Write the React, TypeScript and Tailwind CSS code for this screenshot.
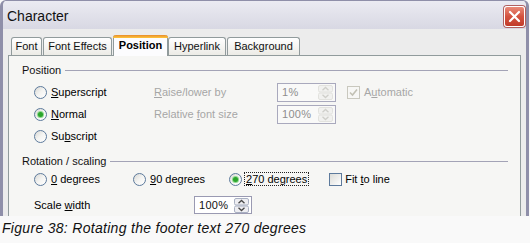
import React from 'react';

const font = { fontFamily: '"Liberation Sans", Arial, sans-serif' };

function Radio({ on }: { on?: boolean }) {
  return (
    <span className="flex h-[13px] w-[13px] shrink-0 items-center justify-center rounded-full border border-[#5d7a9c] bg-linear-to-br from-[#d8d8d4] via-[#f4f4f2] to-white">
      {on && <span className="h-[5px] w-[5px] rounded-full bg-[#2ca52c] shadow-[0_0_0_1px_#8fd88f]" />}
    </span>
  );
}

function Check({ disabled, checked }: { disabled?: boolean; checked?: boolean }) {
  return (
    <span
      className={
        disabled
          ? 'flex h-[13px] w-[13px] shrink-0 items-center justify-center border border-[#c9c8be] bg-[#f7f7f5]'
          : 'flex h-[13px] w-[13px] shrink-0 items-center justify-center border border-[#5d7a9c] bg-linear-to-br from-[#dcdcd7] to-white'
      }
    >
      {checked && (
        <svg width="9" height="9" viewBox="0 0 9 9">
          <path d="M1 4.5 L3.5 7 L8 1.5" fill="none" stroke="#c2c0b4" strokeWidth="1.6" />
        </svg>
      )}
    </span>
  );
}

function Spinner({ disabled }: { disabled?: boolean }) {
  const edge = disabled ? '#e2e2de' : '#a9b0c2';
  const arrow = disabled ? '#cfcfca' : '#4a4a4a';
  const fill = disabled ? '#f1f1ef' : '#eeeef2';
  return (
    <svg width="15" height="15" viewBox="0 0 15 15" className="shrink-0">
      <rect x="0.5" y="0.5" width="14" height="6.5" rx="1.5" fill={fill} stroke={edge} />
      <rect x="0.5" y="8" width="14" height="6.5" rx="1.5" fill={fill} stroke={edge} />
      <path d="M4.5 5.2 L7.5 2.4 L10.5 5.2" fill="none" stroke={arrow} strokeWidth="1.3" />
      <path d="M4.5 9.8 L7.5 12.6 L10.5 9.8" fill="none" stroke={arrow} strokeWidth="1.3" />
    </svg>
  );
}

function Field({ value, disabled, w, h }: { value: string; disabled?: boolean; w: string; h: string }) {
  return (
    <div
      className={`${w} ${h} flex shrink-0 items-center justify-between border pl-[4px] pr-[2px] ${
        disabled ? 'border-[#a9a9bd] bg-[#f9f9f8] text-[#8e8e8e]' : 'border-[#9a9ab2] bg-white text-[#111]'
      }`}
    >
      <span className="tracking-[0.3px]">{value}</span>
      <Spinner disabled={disabled} />
    </div>
  );
}

function Group({ label }: { label: string }) {
  return (
    <div className="flex h-[14px] items-center leading-[14px]">
      <span className="text-[#111]">{label}</span>
      <span className="ml-[4px] h-px flex-1 bg-[#a3a3b6]" />
    </div>
  );
}

function Tab({ label, w, active, ml }: { label: string; w: string; active?: boolean; ml?: string }) {
  if (active) {
    return (
      <div
        className={`${w} ${ml ?? ''} relative z-10 -mb-px flex h-[21px] items-center justify-center rounded-t-[3px] border-x border-[#919b9c] bg-[#fcfcfe] font-bold text-black`}
      >
        <span className="absolute inset-x-[-1px] top-0 h-[3px] rounded-t-[3px] bg-linear-to-b from-[#e68b2c] to-[#ffc73c]" />
        {label}
      </div>
    );
  }
  return (
    <div
      className={`${w} ${ml ?? ''} flex h-[18px] items-center justify-center rounded-t-[3px] border-x border-t border-[#919b9c] bg-linear-to-b from-white to-[#ecebe6] text-[#111]`}
    >
      {label}
    </div>
  );
}

export default function App() {
  return (
    <div className="h-[243px] w-[530px] overflow-hidden bg-[#f9f9f9] text-[11px]" style={font}>
      <div className="flex h-[216px] w-[529px] flex-col overflow-hidden rounded-t-[6px] border-x-[3px] border-t border-[#8f8fa9] bg-[#ececec]">
        <div className="flex h-[28px] shrink-0 items-start justify-between bg-linear-to-b from-[#ebebf2] to-[#d8d8e3] pl-[4px]">
          <span className="mt-[6px] text-[14px] leading-[18px] text-[#111]">Character</span>
          <div className="mr-px mt-[5px] flex h-[21px] w-[21px] items-center justify-center rounded-[3px] border border-white bg-linear-to-b from-[#e98a78] via-[#d4523f] to-[#c13c2b] shadow-[0_0_0_1px_#b06060]">
            <svg width="13" height="13" viewBox="0 0 13 13">
              <path d="M2 2 L11 11 M11 2 L2 11" stroke="white" strokeWidth="2.2" strokeLinecap="round" />
            </svg>
          </div>
        </div>

        <div className="flex flex-1 flex-col px-[5px] pt-[6px]">
          <div className="flex h-[20px] items-end pl-[3px]">
            <Tab label="Font" w="w-[31px]" />
            <Tab label="Font Effects" w="w-[69px]" ml="ml-[1px]" />
            <Tab label="Position" w="w-[55px]" ml="ml-[1px]" active />
            <Tab label="Hyperlink" w="w-[58px]" />
            <Tab label="Background" w="w-[73px]" ml="ml-[1px]" />
          </div>

          <div className="flex flex-1 flex-col border-x border-t border-[#919b9c] bg-[#f6f6f4] pl-[13px] pr-[12px] pt-[7px] leading-[14px]">
            <Group label="Position" />

            <div className="ml-[12px] mt-[4px] flex h-[22px] items-center">
              <div className="flex w-[120px] items-center gap-[4px]">
                <Radio />
                <span>
                  <u>S</u>uperscript
                </span>
              </div>
              <span className="w-[123px] text-[#a6a6a6]">
                <u>R</u>aise/lower by
              </span>
              <Field value="1%" disabled w="w-[59px]" h="h-[19px]" />
              <div className="ml-[11px] flex items-center gap-[4px] text-[#a6a6a6]">
                <Check disabled checked />
                <span>
                  A<u>u</u>tomatic
                </span>
              </div>
            </div>

            <div className="ml-[12px] flex h-[22px] items-center">
              <div className="flex w-[120px] items-center gap-[4px]">
                <Radio on />
                <span>
                  <u>N</u>ormal
                </span>
              </div>
              <span className="w-[123px] text-[#a6a6a6]">
                Relative <u>f</u>ont size
              </span>
              <Field value="100%" disabled w="w-[59px]" h="h-[19px]" />
            </div>

            <div className="ml-[12px] flex h-[22px] items-center">
              <div className="flex items-center gap-[4px]">
                <Radio />
                <span>
                  Su<u>b</u>script
                </span>
              </div>
            </div>

            <div className="mt-[7px]">
              <Group label="Rotation / scaling" />
            </div>

            <div className="ml-[12px] flex h-[22px] items-center">
              <div className="flex w-[99px] items-center gap-[4px]">
                <Radio />
                <span>
                  <u>0</u> degrees
                </span>
              </div>
              <div className="flex w-[96px] items-center gap-[2px]">
                <Radio />
                <span className="ml-[2px]">
                  <u>9</u>0 degrees
                </span>
              </div>
              <div className="flex items-center gap-[2px]">
                <Radio on />
                <span className="border border-dotted border-[#222] px-px leading-[12px]">
                  <u>2</u>70 degrees
                </span>
              </div>
              <div className="ml-[20px] flex items-center gap-[3px]">
                <Check />
                <span>
                  Fit <u>t</u>o line
                </span>
              </div>
            </div>

            <div className="ml-[12px] mt-[4px] flex h-[22px] items-center">
              <span className="w-[160px]">
                Scale <u>w</u>idth
              </span>
              <Field value="100%" w="w-[58px]" h="h-[18px]" />
            </div>
          </div>
        </div>
      </div>
      <div className="h-[27px] pl-[2px] text-[14px] italic leading-[24px] tracking-[0.3px] text-[#111]">
        Figure 38: Rotating the footer text 270 degrees
      </div>
    </div>
  );
}
